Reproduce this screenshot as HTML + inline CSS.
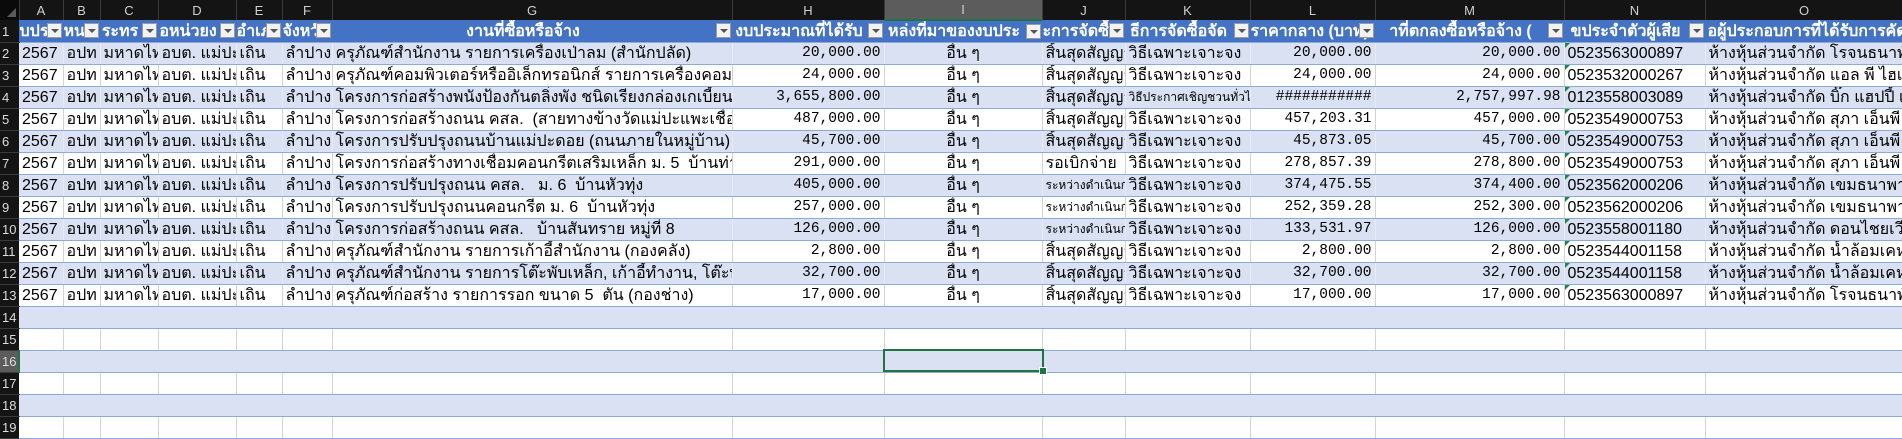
<!DOCTYPE html>
<html><head><meta charset="utf-8">
<style>
body{margin:0;background:#fff;width:1902px;height:437px;overflow:hidden;font-family:"Liberation Sans","Noto Sans CJK SC",sans-serif;}
table{border-collapse:collapse;table-layout:fixed;width:1903px;}
td{height:22px;padding:0 3px;white-space:nowrap;overflow:hidden;font-size:16px;color:#000;box-sizing:border-box;border-right:1px solid #d4d4d4;border-bottom:1px solid #8ea9db;position:relative;line-height:21px;}
tr.ch td{height:19px;background:#141414;color:#cfcfcf;font-size:13px;text-align:center;border-right:1px solid #3a3a3a;border-bottom:none;line-height:19px;}
tr.ch td.sel{background:#5c5c5c;border-bottom:2px solid #217346;}
td.rh{background:#141414;color:#dcdcdc;font-size:13px;padding:0 0 0 2px;border-right:none;border-bottom:1px solid #3a3a3a;text-align:left;}
td.rh.sel{background:#5c5c5c;border-right:2px solid #217346;}
tr.hd td{background:#4472c4;color:#fff;font-weight:bold;text-align:center;padding:0 18px 0 0;border-right:1px solid #4472c4;}
tr.hd td.rh{background:#141414;font-weight:normal;color:#dcdcdc;text-align:left;padding-left:2px;}
.fb{position:absolute;right:1px;top:3px;width:15px;height:15px;background:#f2f2f2;border:1px solid #9a9a9a;box-sizing:border-box;}
.fb:after{content:"";position:absolute;left:3px;top:5px;border-left:4px solid transparent;border-right:4px solid transparent;border-top:4px solid #555;}
tr.b td{background:#d9e1f2;border-right:1px solid #e6ebf5;}
tr.b td.rh{background:#141414;border-right:none;}
tr.b td.rh.sel{background:#5c5c5c;border-right:2px solid #217346;}
tr.e.b td{border-right:1px solid #d9e1f2;}
.r{text-align:right;font-family:"Liberation Mono",monospace;font-size:14.5px;}
.c{text-align:center;}
.sm{font-size:12px;}
.g:before{content:"";position:absolute;left:0;top:0;border-top:5px solid #1e8a3c;border-right:5px solid transparent;}
.corner:after{content:"";position:absolute;right:3px;bottom:3px;border-left:9px solid transparent;border-bottom:9px solid #5a5a5a;}
.selbox{position:absolute;left:883px;top:349px;width:161px;height:23px;border:2px solid #217346;box-sizing:border-box;}
.selbox:after{content:"";position:absolute;right:-5px;bottom:-5px;width:6px;height:6px;background:#217346;border:1px solid #fff;}
</style></head><body>
<table>
<colgroup><col style="width:19px"><col style="width:44px"><col style="width:37px"><col style="width:58px"><col style="width:78px"><col style="width:46px"><col style="width:50px"><col style="width:400px"><col style="width:152px"><col style="width:158px"><col style="width:83px"><col style="width:125px"><col style="width:125px"><col style="width:189px"><col style="width:141px"><col style="width:198px"></colgroup>
<tr class="ch"><td class="corner" style="background:#0a0a0a"></td><td>A</td><td>B</td><td>C</td><td>D</td><td>E</td><td>F</td><td>G</td><td>H</td><td class="sel">I</td><td>J</td><td>K</td><td>L</td><td>M</td><td>N</td><td>O</td></tr>
<tr class="hd"><td class="rh">1</td><td>บปร<span class="fb"></span></td><td>หน<span class="fb"></span></td><td>ระทร<span class="fb"></span></td><td>่อหน่วยง<span class="fb"></span></td><td>อำเภ<span class="fb"></span></td><td>จังหวั<span class="fb"></span></td><td>งานที่ซื้อหรือจ้าง<span class="fb"></span></td><td>งบประมาณที่ได้รับ<span class="fb"></span></td><td>หล่งที่มาของงบประ<span class="fb"></span></td><td>ะการจัดซื้<span class="fb"></span></td><td>ธีการจัดซื้อจัด<span class="fb"></span></td><td>ราคากลาง (บาท)<span class="fb"></span></td><td>าที่ตกลงซื้อหรือจ้าง (<span class="fb"></span></td><td>ขประจำตัวผู้เสีย<span class="fb"></span></td><td style="text-align:left;padding-left:2px">อผู้ประกอบการที่ได้รับการคัดเลือก</td></tr>
<tr class="b"><td class="rh">2</td><td>2567</td><td>อปท</td><td>มหาดไทย</td><td>อบต. แม่ปะ</td><td>เถิน</td><td class="r" style="font-family:inherit;font-size:16px">ลำปาง</td><td>ครุภัณฑ์สำนักงาน รายการเครื่องเป่าลม (สำนักปลัด)</td><td class="r">20,000.00</td><td class="c">อื่น ๆ</td><td>สิ้นสุดสัญญา</td><td>วิธีเฉพาะเจาะจง</td><td class="r">20,000.00</td><td class="r">20,000.00</td><td class="g">0523563000897</td><td>ห้างหุ้นส่วนจำกัด โรจนธนาพัฒน์</td></tr>
<tr><td class="rh">3</td><td>2567</td><td>อปท</td><td>มหาดไทย</td><td>อบต. แม่ปะ</td><td>เถิน</td><td class="r" style="font-family:inherit;font-size:16px">ลำปาง</td><td>ครุภัณฑ์คอมพิวเตอร์หรืออิเล็กทรอนิกส์ รายการเครื่องคอมพิวเตอร์</td><td class="r">24,000.00</td><td class="c">อื่น ๆ</td><td>สิ้นสุดสัญญา</td><td>วิธีเฉพาะเจาะจง</td><td class="r">24,000.00</td><td class="r">24,000.00</td><td class="g">0523532000267</td><td>ห้างหุ้นส่วนจำกัด แอล พี ไฮเทค</td></tr>
<tr class="b"><td class="rh">4</td><td>2567</td><td>อปท</td><td>มหาดไทย</td><td>อบต. แม่ปะ</td><td>เถิน</td><td class="r" style="font-family:inherit;font-size:16px">ลำปาง</td><td>โครงการก่อสร้างพนังป้องกันตลิ่งพัง ชนิดเรียงกล่องเกเบี้ยน</td><td class="r">3,655,800.00</td><td class="c">อื่น ๆ</td><td>สิ้นสุดสัญญา</td><td class="sm">วิธีประกาศเชิญชวนทั่วไป</td><td class="r">###########</td><td class="r">2,757,997.98</td><td class="g">0123558003089</td><td>ห้างหุ้นส่วนจำกัด บิ๊ก แฮปปี้ เอ็นจิเนียริ่ง</td></tr>
<tr><td class="rh">5</td><td>2567</td><td>อปท</td><td>มหาดไทย</td><td>อบต. แม่ปะ</td><td>เถิน</td><td class="r" style="font-family:inherit;font-size:16px">ลำปาง</td><td>โครงการก่อสร้างถนน คสล. &nbsp;(สายทางข้างวัดแม่ปะแพะเชื่อม</td><td class="r">487,000.00</td><td class="c">อื่น ๆ</td><td>สิ้นสุดสัญญา</td><td>วิธีเฉพาะเจาะจง</td><td class="r">457,203.31</td><td class="r">457,000.00</td><td class="g">0523549000753</td><td>ห้างหุ้นส่วนจำกัด สุภา เอ็นพี</td></tr>
<tr class="b"><td class="rh">6</td><td>2567</td><td>อปท</td><td>มหาดไทย</td><td>อบต. แม่ปะ</td><td>เถิน</td><td class="r" style="font-family:inherit;font-size:16px">ลำปาง</td><td>โครงการปรับปรุงถนนบ้านแม่ปะดอย (ถนนภายในหมู่บ้าน)</td><td class="r">45,700.00</td><td class="c">อื่น ๆ</td><td>สิ้นสุดสัญญา</td><td>วิธีเฉพาะเจาะจง</td><td class="r">45,873.05</td><td class="r">45,700.00</td><td class="g">0523549000753</td><td>ห้างหุ้นส่วนจำกัด สุภา เอ็นพี</td></tr>
<tr><td class="rh">7</td><td>2567</td><td>อปท</td><td>มหาดไทย</td><td>อบต. แม่ปะ</td><td>เถิน</td><td class="r" style="font-family:inherit;font-size:16px">ลำปาง</td><td>โครงการก่อสร้างทางเชื่อมคอนกรีตเสริมเหล็ก ม. 5 &nbsp;บ้านท่าเ</td><td class="r">291,000.00</td><td class="c">อื่น ๆ</td><td>รอเบิกจ่าย</td><td>วิธีเฉพาะเจาะจง</td><td class="r">278,857.39</td><td class="r">278,800.00</td><td class="g">0523549000753</td><td>ห้างหุ้นส่วนจำกัด สุภา เอ็นพี</td></tr>
<tr class="b"><td class="rh">8</td><td>2567</td><td>อปท</td><td>มหาดไทย</td><td>อบต. แม่ปะ</td><td>เถิน</td><td class="r" style="font-family:inherit;font-size:16px">ลำปาง</td><td>โครงการปรับปรุงถนน คสล. &nbsp; ม. 6 &nbsp;บ้านหัวทุ่ง</td><td class="r">405,000.00</td><td class="c">อื่น ๆ</td><td class="sm">ระหว่างดำเนินการ</td><td>วิธีเฉพาะเจาะจง</td><td class="r">374,475.55</td><td class="r">374,400.00</td><td class="g">0523562000206</td><td>ห้างหุ้นส่วนจำกัด เขมธนาพาณิชย์</td></tr>
<tr><td class="rh">9</td><td>2567</td><td>อปท</td><td>มหาดไทย</td><td>อบต. แม่ปะ</td><td>เถิน</td><td class="r" style="font-family:inherit;font-size:16px">ลำปาง</td><td>โครงการปรับปรุงถนนคอนกรีต ม. 6 &nbsp;บ้านหัวทุ่ง</td><td class="r">257,000.00</td><td class="c">อื่น ๆ</td><td class="sm">ระหว่างดำเนินการ</td><td>วิธีเฉพาะเจาะจง</td><td class="r">252,359.28</td><td class="r">252,300.00</td><td class="g">0523562000206</td><td>ห้างหุ้นส่วนจำกัด เขมธนาพาณิชย์</td></tr>
<tr class="b"><td class="rh">10</td><td>2567</td><td>อปท</td><td>มหาดไทย</td><td>อบต. แม่ปะ</td><td>เถิน</td><td class="r" style="font-family:inherit;font-size:16px">ลำปาง</td><td>โครงการก่อสร้างถนน คสล. &nbsp; บ้านสันทราย หมู่ที่ 8</td><td class="r">126,000.00</td><td class="c">อื่น ๆ</td><td class="sm">ระหว่างดำเนินการ</td><td>วิธีเฉพาะเจาะจง</td><td class="r">133,531.97</td><td class="r">126,000.00</td><td class="g">0523558001180</td><td>ห้างหุ้นส่วนจำกัด ดอนไชยเวียง</td></tr>
<tr><td class="rh">11</td><td>2567</td><td>อปท</td><td>มหาดไทย</td><td>อบต. แม่ปะ</td><td>เถิน</td><td class="r" style="font-family:inherit;font-size:16px">ลำปาง</td><td>ครุภัณฑ์สำนักงาน รายการเก้าอี้สำนักงาน (กองคลัง)</td><td class="r">2,800.00</td><td class="c">อื่น ๆ</td><td>สิ้นสุดสัญญา</td><td>วิธีเฉพาะเจาะจง</td><td class="r">2,800.00</td><td class="r">2,800.00</td><td class="g">0523544001158</td><td>ห้างหุ้นส่วนจำกัด น้ำล้อมเคหะภัณฑ์</td></tr>
<tr class="b"><td class="rh">12</td><td>2567</td><td>อปท</td><td>มหาดไทย</td><td>อบต. แม่ปะ</td><td>เถิน</td><td class="r" style="font-family:inherit;font-size:16px">ลำปาง</td><td>ครุภัณฑ์สำนักงาน รายการโต๊ะพับเหล็ก, เก้าอี้ทำงาน, โต๊ะทำงาน</td><td class="r">32,700.00</td><td class="c">อื่น ๆ</td><td>สิ้นสุดสัญญา</td><td>วิธีเฉพาะเจาะจง</td><td class="r">32,700.00</td><td class="r">32,700.00</td><td class="g">0523544001158</td><td>ห้างหุ้นส่วนจำกัด น้ำล้อมเคหะภัณฑ์</td></tr>
<tr><td class="rh">13</td><td>2567</td><td>อปท</td><td>มหาดไทย</td><td>อบต. แม่ปะ</td><td>เถิน</td><td class="r" style="font-family:inherit;font-size:16px">ลำปาง</td><td>ครุภัณฑ์ก่อสร้าง รายการรอก ขนาด 5 &nbsp;ตัน (กองช่าง)</td><td class="r">17,000.00</td><td class="c">อื่น ๆ</td><td>สิ้นสุดสัญญา</td><td>วิธีเฉพาะเจาะจง</td><td class="r">17,000.00</td><td class="r">17,000.00</td><td class="g">0523563000897</td><td>ห้างหุ้นส่วนจำกัด โรจนธนาพัฒน์</td></tr>
<tr class="b e"><td class="rh">14</td><td></td><td></td><td></td><td></td><td></td><td></td><td></td><td></td><td></td><td></td><td></td><td></td><td></td><td></td><td></td></tr>
<tr><td class="rh">15</td><td></td><td></td><td></td><td></td><td></td><td></td><td></td><td></td><td></td><td></td><td></td><td></td><td></td><td></td><td></td></tr>
<tr class="b e"><td class="rh sel">16</td><td></td><td></td><td></td><td></td><td></td><td></td><td></td><td></td><td></td><td></td><td></td><td></td><td></td><td></td><td></td></tr>
<tr><td class="rh">17</td><td></td><td></td><td></td><td></td><td></td><td></td><td></td><td></td><td></td><td></td><td></td><td></td><td></td><td></td><td></td></tr>
<tr class="b e"><td class="rh">18</td><td></td><td></td><td></td><td></td><td></td><td></td><td></td><td></td><td></td><td></td><td></td><td></td><td></td><td></td><td></td></tr>
<tr><td class="rh">19</td><td></td><td></td><td></td><td></td><td></td><td></td><td></td><td></td><td></td><td></td><td></td><td></td><td></td><td></td><td></td></tr>
</table>
<div class="selbox"></div>
</body></html>
